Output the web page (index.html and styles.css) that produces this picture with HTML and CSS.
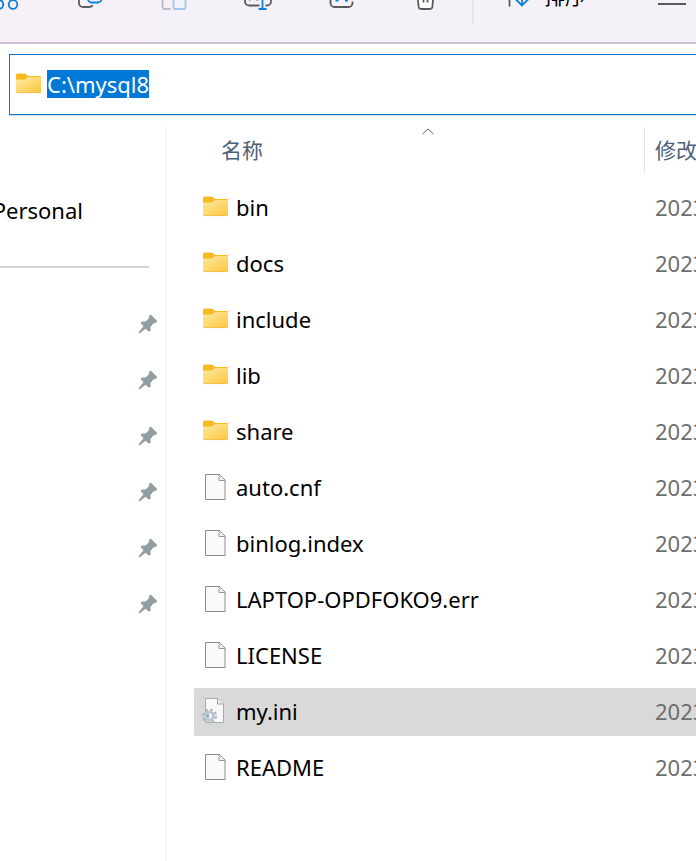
FILE: index.html
```html
<!DOCTYPE html>
<html lang="zh-CN">
<head>
<meta charset="utf-8">
<title>mysql8</title>
<link rel="stylesheet" href="styles.css">
</head>
<body>
<svg class="defs" aria-hidden="true">
  <defs>
    <linearGradient id="folder-fill" x1="0" y1="0" x2="1" y2="1">
      <stop offset="0" stop-color="#ffe9a6"/><stop offset="1" stop-color="#fdc83a"/>
    </linearGradient>
    <symbol id="folder" viewBox="-1 -1 26 24">
      <path d="M0 2a1.500 1.500 0 0 1 1.500-1.500H9L12 3h12a1 1 0 0 1 1 1v4H0z" fill="#f8b91c"/>
      <path d="M0 6.500h9L12 4h13v15a1 1 0 0 1-1 1H1a1 1 0 0 1-1-1z" fill="url(#folder-fill)"/>
      <path d="M.5 19.600h24" stroke="#eebc45" stroke-width=".8"/>
    </symbol>
    <symbol id="file" viewBox="0 0 26 28">
      <path d="M3.500 1.500h14l5.500 5.500v19.500H3.500z" fill="#fafafa" stroke="#8d8d8d"/>
      <path d="M17 1.500v6h6" fill="#eee" stroke="#999"/>
    </symbol>
    <symbol id="config" viewBox="0 0 26 28">
      <path d="M3.500 1.500h12.500l5.500 5.500v18.500H3.500z" fill="#f8f8f8" stroke="#a9a9a9"/>
      <path d="M15.500 1.500v5.500h6" fill="#eee" stroke="#a0a0a0"/>
      <circle cx="7.500" cy="19" r="6" fill="none" stroke="#a9b9c3" stroke-width="3" stroke-dasharray="2.400 2.300"/>
      <circle cx="7.500" cy="19" r="4" fill="#edf2f5" stroke="#b8c9d4" stroke-width="3"/>
      <path d="M6 17.500v3" stroke="#70838e" stroke-width="1.500"/>
    </symbol>
    <symbol id="pin" viewBox="0 0 20 20">
      <path d="M11.500 1.200 13 .8l6 6-.6 1.800-3 .8-3 3.600.2 3.500-1.600 1.200-3.500-3L2 19.200H.8V18l4.700-5.700-3-3.300 1.300-1.600 3.600.2 3.300-3z" fill="#929da3"/>
    </symbol>
  </defs>
</svg>

<header class="toolbar">
  <button class="tool" aria-label="剪切"><svg viewBox="0 0 32 32"><path class="ink" d="m11 21 10-17M21 21 11 4"/><circle class="blue" cx="9" cy="24.500" r="4.300"/><circle class="blue" cx="23" cy="24.500" r="4.300"/></svg></button>
  <button class="tool" aria-label="复制"><svg viewBox="0 0 32 32"><path class="ink" d="M10 9a4 4 0 0 0-5 4v10a4 4 0 0 0 4 4h6q3 0 3.500-2"/><rect class="blue" x="14" y="3" width="13.500" height="19.500" rx="3.500"/></svg></button>
  <button class="tool" aria-label="粘贴" disabled><svg viewBox="0 0 32 32"><path class="ink" d="M12.500 29H6.500a2 2 0 0 1-2-2V7H20"/><rect class="blue" x="15.500" y="12" width="12" height="17" rx="2"/></svg></button>
  <button class="tool" aria-label="重命名"><svg viewBox="0 0 32 32"><path class="ink" d="M17.500 9H7a4 4 0 0 0-4 4v8.500a4 4 0 0 0 4 4h10.500M23.500 25.500h1.500a4 4 0 0 0 4-4V13"/><path class="blue" d="m7.500 20.500 4-10 4 10M20.500 6v23M16.500 29h8"/></svg></button>
  <button class="tool" aria-label="共享"><svg viewBox="0 0 32 32"><path class="ink" d="M14 8H8.500a4 4 0 0 0-4 4v11a4 4 0 0 0 4 4h14a4 4 0 0 0 4-4v-1.500"/><path class="blue" d="M9.500 20.500h3M19 20.500h3"/></svg></button>
  <button class="tool" aria-label="删除"><svg viewBox="0 0 32 32"><path fill="#fff" class="ink" d="m6.800 8 1.800 18.500q.3 2.500 2.400 2.500h9q2.100 0 2.400-2.500L24.200 8M4 8h24M13.500 14v8.500M17.500 14v8.500"/></svg></button>
  <span class="divider"></span>
  <button class="sort"><svg viewBox="0 0 32 32"><path class="ink" d="M7.500 26.500V6L3 12"/><path class="blue" d="M20 5v20.500M14 19.500l6 6 6-6"/></svg><span>排序</span></button>
  <button class="view" aria-label="查看"><svg viewBox="0 0 32 32"><path class="ink" d="M2 8h28M2 16h28M2 24h28"/></svg></button>
</header>

<form class="address">
  <svg class="icon"><use href="#folder"/></svg>
  <input class="path" type="text" value="C:\mysql8" aria-label="地址">
</form>

<main class="explorer">
  <nav class="sidebar">
    <a class="account" href="#">Personal</a>
    <hr>
    <ul class="pins">
      <li><svg><use href="#pin"/></svg></li>
      <li><svg><use href="#pin"/></svg></li>
      <li><svg><use href="#pin"/></svg></li>
      <li><svg><use href="#pin"/></svg></li>
      <li><svg><use href="#pin"/></svg></li>
      <li><svg><use href="#pin"/></svg></li>
    </ul>
  </nav>
  <section class="content">
    <table class="files">
      <thead>
        <tr><th class="name">名称<svg class="caret" viewBox="0 0 12 7"><path d="m.5 6 5.500-5 5.500 5" fill="none" stroke="#666"/></svg></th><th class="date">修改</th></tr>
      </thead>
      <tbody>
        <tr><td><div class="item"><svg class="icon"><use href="#folder"/></svg>bin</div></td><td class="date">2023</td></tr>
        <tr><td><div class="item"><svg class="icon"><use href="#folder"/></svg>docs</div></td><td class="date">2023</td></tr>
        <tr><td><div class="item"><svg class="icon"><use href="#folder"/></svg>include</div></td><td class="date">2023</td></tr>
        <tr><td><div class="item"><svg class="icon"><use href="#folder"/></svg>lib</div></td><td class="date">2023</td></tr>
        <tr><td><div class="item"><svg class="icon"><use href="#folder"/></svg>share</div></td><td class="date">2023</td></tr>
        <tr><td><div class="item"><svg class="icon doc"><use href="#file"/></svg>auto.cnf</div></td><td class="date">2023</td></tr>
        <tr><td><div class="item"><svg class="icon doc"><use href="#file"/></svg>binlog.index</div></td><td class="date">2023</td></tr>
        <tr><td><div class="item"><svg class="icon doc"><use href="#file"/></svg>LAPTOP-OPDFOKO9.err</div></td><td class="date">2023</td></tr>
        <tr><td><div class="item"><svg class="icon doc"><use href="#file"/></svg>LICENSE</div></td><td class="date">2023</td></tr>
        <tr class="selected"><td><div class="item"><svg class="icon doc"><use href="#config"/></svg>my.ini</div></td><td class="date">2023</td></tr>
        <tr><td><div class="item"><svg class="icon doc"><use href="#file"/></svg>README</div></td><td class="date">2023</td></tr>
      </tbody>
    </table>
  </section>
</main>
</body>
</html>
```
FILE: styles.css
```css
* { box-sizing: border-box; }

body {
  margin: 0;
  min-height: 100vh;
  display: flex;
  flex-direction: column;
  overflow: hidden;
  background: #fff;
  color: #000;
  font: 22px/28px "Noto Sans", "Noto Sans CJK SC", sans-serif;
}

button, input { font: inherit; color: inherit; border: 0; background: none; padding: 0; }
svg { display: block; flex: none; }
.defs { position: absolute; width: 0; height: 0; }

.toolbar {
  display: flex;
  align-items: flex-end;
  height: 44px;
  overflow: hidden;
  border-bottom: 2px solid #d0c0dc;
  background: linear-gradient(90deg, #f6f0f7, #f4f1f8 40%);
}
.toolbar button { flex: none; padding-bottom: 30px; }
.toolbar svg { width: 32px; height: 32px; }
.toolbar path, .toolbar circle, .toolbar rect { stroke-width: 1.8; }
.toolbar .ink:not([fill]), .toolbar .blue { fill: none; }
.ink { stroke: #5b5b5b; }
.blue { stroke: #0f7fd8; }
.tool { width: 84px; display: flex; justify-content: center; }
.tool:first-child { margin-left: -36px; }
.tool:disabled .ink { stroke: #bcbac0; }
.tool:disabled .blue { stroke: #a2c9eb; }
.divider { flex: none; width: 2px; height: 64px; margin: 0 28px 18px 4px; background: #e6e3ea; }
.toolbar .sort { display: flex; align-items: flex-end; gap: 10px; font-size: 21px; }
.sort span { height: 30px; line-height: 28px; }
.view { margin-left: auto; margin-right: 8px; }

.address {
  display: flex;
  align-items: center;
  gap: 6px;
  height: 61px;
  margin: 10px 0 0 9px;
  padding: 0 0 2px 5px;
  border: 1px solid #0f76cc;
  border-right: 0;
  box-shadow: 0 1px #d5dce3;
}
.path {
  field-sizing: content;
  height: 28px;
  background: #0078d7;
  color: #fff;
}

.explorer { flex: 1; display: flex; }

.sidebar {
  flex: none;
  width: 167px;
  margin-top: 12px;
  padding-top: 59px;
  overflow: hidden;
  border-right: 2px solid #f7f7f7;
}
.account {
  display: flex;
  justify-content: flex-end;
  align-items: center;
  height: 48px;
  padding-right: 82px;
  color: inherit;
  text-decoration: none;
}
.sidebar hr { height: 2px; margin: 32px 16px 32px 0; border: 0; background: #d4d4d4; }
.pins { display: grid; gap: 8px; margin: 0; padding: 0 7px 0 0; list-style: none; }
.pins li { height: 48px; display: flex; align-items: center; justify-content: flex-end; }
.pins svg { width: 20px; height: 20px; }

.content { flex: 1; min-width: 0; overflow: hidden; padding: 4px 0 0 27px; }
.files { width: 100%; table-layout: fixed; border-spacing: 0 8px; }
.files th { height: 49px; padding: 0 0 4px; text-align: left; font-size: 21px; font-weight: 400; color: #4c607a; }
.files td { height: 48px; padding: 0 0 2px; }
.files .name { position: relative; padding-left: 27px; }
.files .name::after { content: ""; position: absolute; top: 0; right: 0; width: 1px; height: 46px; background: #e2e2e2; }
.caret { position: absolute; top: 1px; left: 50%; width: 12px; height: 7px; margin-left: 2px; }
.files .date { width: 51px; padding-left: 10px; overflow: hidden; white-space: nowrap; }
.files td.date { color: #6d6d6d; }
.item { display: flex; align-items: center; gap: 8px; padding-left: 8px; }
.icon { width: 26px; height: 24px; }
.icon.doc { height: 28px; }
.selected td { background: #d9d9d9; }
.selected td:first-child { border-radius: 2px 0 0 2px; }
```
